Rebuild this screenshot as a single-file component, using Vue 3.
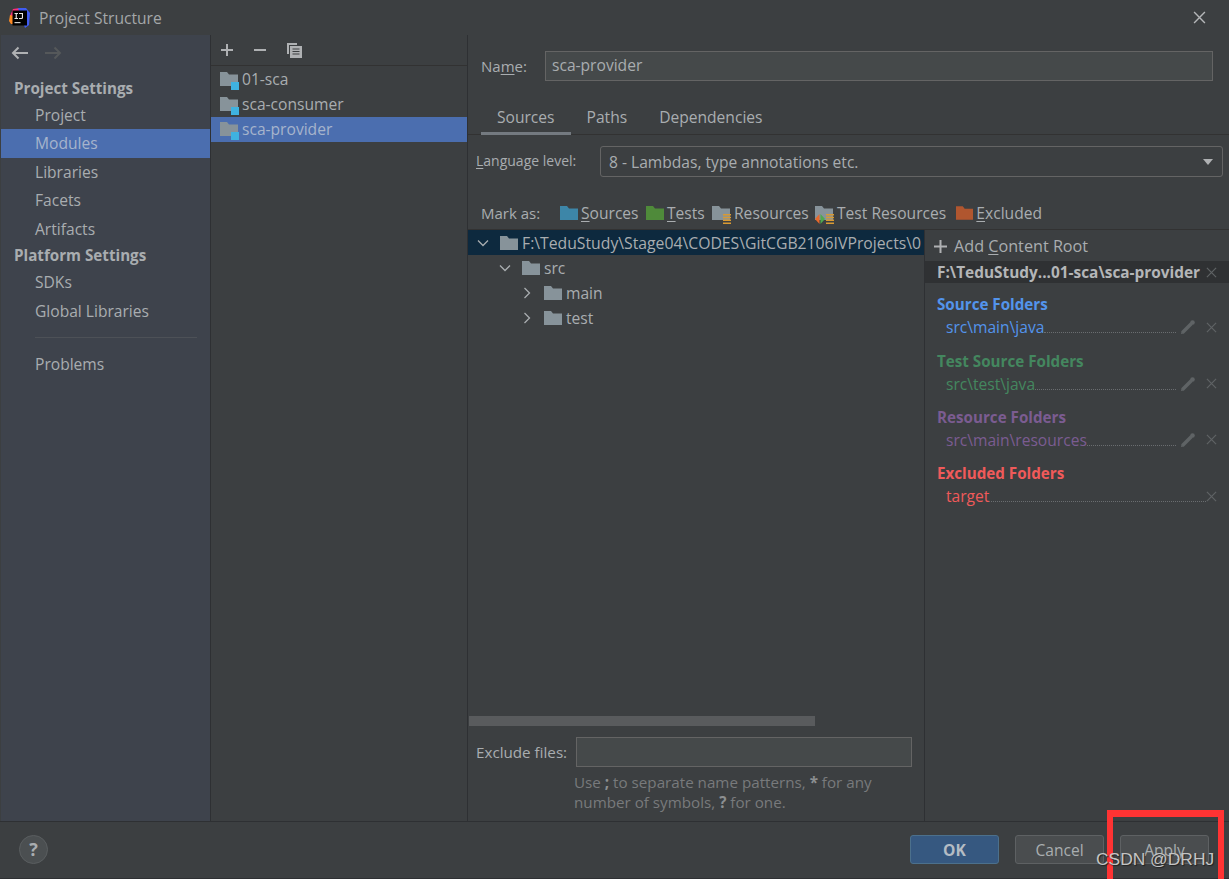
<script setup>
const navGroups = [
  { title: 'Project Settings', items: ['Project', 'Modules', 'Libraries', 'Facets', 'Artifacts'] },
  { title: 'Platform Settings', items: ['SDKs', 'Global Libraries'] }
]
const modules = ['01-sca', 'sca-consumer', 'sca-provider']
const tree = [
  { name: 'F:\\TeduStudy\\Stage04\\CODES\\GitCGB2106IVProjects\\0', depth: 0, open: true, selected: true },
  { name: 'src', depth: 1, open: true },
  { name: 'main', depth: 2, open: false },
  { name: 'test', depth: 2, open: false }
]
const folderGroups = [
  { title: 'Source Folders', path: 'src\\main\\java', color: '#5394ec', edit: true },
  { title: 'Test Source Folders', path: 'src\\test\\java', color: '#44875f', edit: true },
  { title: 'Resource Folders', path: 'src\\main\\resources', color: '#7b5c91', edit: true },
  { title: 'Excluded Folders', path: 'target', color: '#f05a5a', edit: false }
]
</script>

<template>
  <div class="window">
    <svg class="defs" width="0" height="0">
      <symbol id="folder" viewBox="0 0 18 14">
        <path d="M0 0h7l2 2.500h9V14H0z" fill="currentColor" />
      </symbol>
      <symbol id="close" viewBox="0 0 12 12">
        <path d="M1 1l10 10M11 1L1 11" stroke="currentColor" stroke-width="1.300" fill="none" />
      </symbol>
      <symbol id="pencil" viewBox="0 0 14 14">
        <path d="M1.500 12.500L10.500 3.500" stroke="currentColor" stroke-width="3.600" fill="none" />
        <path d="M0 14l.6-3 2.400 2.400z" fill="currentColor" />
        <circle cx="11.500" cy="2.500" r="2.300" fill="currentColor" />
      </symbol>
      <symbol id="stack" viewBox="0 0 8 10">
        <path d="M0 0h8v1.500H0zM0 2.800h8v1.500H0zM0 5.600h8v1.500H0zM0 8.400h8v1.500H0z" fill="#d99a33" />
      </symbol>
    </svg>

    <header class="titlebar">
      <svg class="logo" width="21" height="20" viewBox="0 0 21 20">
        <path d="M1 8L4 1l7-1 3 3-9 6-2 6z" fill="#fc2f7f" />
        <path d="M9 0l8 0 4 5-1 12-4 3z" fill="#3f5cf0" />
        <path d="M0 13l1-6 4 1v8l-3 0z" fill="#fd8a24" />
        <rect x="3.500" y="2.500" width="14.500" height="15" fill="#000" />
        <path d="M5.500 5h3.500v1H7.800v4H9v1H5.500v-1h1.200V6H5.500zM10 5h4v4.800q0 1.200-1.500 1.200H10v-1h2q.9 0 .9-.6V6H10z" fill="#e8e8e8" />
        <rect x="5.500" y="14" width="6" height="1.200" fill="#d0d0d0" />
      </svg>
      <span class="title">Project Structure</span>
      <svg class="win-close" width="13" height="13"><use href="#close" /></svg>
    </header>

    <main class="body">
      <aside class="sidebar">
        <div class="history">
          <svg width="18" height="14" viewBox="0 0 18 14"><path d="M17 7H2M7.500 1.500L2 7l5.500 5.500" fill="none" stroke="#afb1b3" stroke-width="2" /></svg>
          <svg width="18" height="14" viewBox="0 0 18 14"><path d="M1 7h15M10.500 1.500L16 7l-5.500 5.500" fill="none" stroke="#55585a" stroke-width="2" /></svg>
        </div>
        <template v-for="group in navGroups" :key="group.title">
          <div class="nav-title">{{ group.title }}</div>
          <div v-for="item in group.items" :key="item" class="nav-item" :class="{ active: item === 'Modules' }">{{ item }}</div>
        </template>
        <div class="nav-sep"></div>
        <div class="nav-item">Problems</div>
      </aside>

      <section class="modules">
        <div class="mod-toolbar">
          <svg width="14" height="14" viewBox="0 0 14 14"><path d="M7 1v12M1 7h12" stroke="#afb1b3" stroke-width="2" /></svg>
          <svg width="14" height="14" viewBox="0 0 14 14"><path d="M1 7h12" stroke="#afb1b3" stroke-width="2" /></svg>
          <svg width="17" height="17" viewBox="0 0 17 17">
            <path d="M1 1h10v2H3v9H1z" fill="#afb1b3" />
            <path d="M4 4h12v12H4z" fill="#afb1b3" />
            <path d="M6.500 7h7M6.500 9.500h7M6.500 12h7" stroke="#3c3f41" stroke-width="1.200" />
          </svg>
        </div>
        <div class="mod-list">
          <div v-for="m in modules" :key="m" class="mod-row" :class="{ active: m === 'sca-provider' }">
            <span class="mod-icon">
              <svg class="c-folder" width="18" height="14"><use href="#folder" /></svg>
              <i class="mod-badge"></i>
            </span>
            {{ m }}
          </div>
        </div>
      </section>

      <section class="detail">
        <div class="name-row">
          <label class="name-label">Na<u>m</u>e:</label>
          <div class="input name-input">sca-provider</div>
        </div>
        <nav class="tabs">
          <span class="tab current">Sources</span>
          <span class="tab">Paths</span>
          <span class="tab">Dependencies</span>
        </nav>
        <div class="lang-row">
          <label class="lang-label"><u>L</u>anguage level:</label>
          <div class="combo">
            8 - Lambdas, type annotations etc.
            <svg width="10" height="6" viewBox="0 0 10 6"><path d="M0 0h10L5 6z" fill="#afb1b3" /></svg>
          </div>
        </div>
        <div class="mark-row">
          <span class="mark-label">Mark as:</span>
          <span class="mark m-sources"><svg width="18" height="14"><use href="#folder" /></svg><span><u>S</u>ources</span></span>
          <span class="mark m-tests"><svg width="18" height="14"><use href="#folder" /></svg><span><u>T</u>ests</span></span>
          <span class="mark m-res">
            <span class="mark-icon">
              <svg class="c-folder" width="18" height="14"><use href="#folder" /></svg>
              <svg class="stack" width="8" height="10"><use href="#stack" /></svg>
            </span>
            <span>Resources</span>
          </span>
          <span class="mark m-testres">
            <span class="mark-icon">
              <svg class="c-folder" width="18" height="14"><use href="#folder" /></svg>
              <svg class="stack" width="8" height="10"><use href="#stack" /></svg>
              <svg class="arrows" width="10" height="10" viewBox="0 0 10 10"><path d="M4.500 0v10L0 5z" fill="#e8692c" /><path d="M5.500 0v10L10 5z" fill="#4fa84f" /></svg>
            </span>
            <span>Test Resources</span>
          </span>
          <span class="mark m-excl"><svg width="18" height="14"><use href="#folder" /></svg><span><u>E</u>xcluded</span></span>
        </div>

        <div class="content">
          <div class="tree-pane">
            <div class="tree">
              <div
                v-for="node in tree"
                :key="node.name"
                class="tree-row"
                :class="{ selected: node.selected }"
                :style="{ paddingLeft: 9 + node.depth * 22 + 'px' }"
              >
                <svg class="chevron" width="12" height="12" viewBox="0 0 12 12">
                  <path v-if="node.open" d="M1 3.500l5 5 5-5" />
                  <path v-else d="M3.500 1l5 5-5 5" />
                </svg>
                <svg class="c-folder" width="18" height="14"><use href="#folder" /></svg>
                <span class="tree-label">{{ node.name }}</span>
              </div>
            </div>
            <div class="hscroll"><div class="hthumb"></div></div>
            <div class="exclude-row">
              <label>Exclude files:</label>
              <div class="input exclude-input"></div>
            </div>
            <p class="hint">Use <b>;</b> to separate name patterns, <b>*</b> for any<br />number of symbols, <b>?</b> for one.</p>
          </div>

          <div class="roots">
            <div class="add-root">
              <svg width="13" height="13" viewBox="0 0 13 13"><path d="M6.500 0v13M0 6.500h13" stroke="#afb1b3" stroke-width="2" /></svg>
              <span>Add <u>C</u>ontent Root</span>
            </div>
            <div class="root-head">
              <span>F:\TeduStudy...01-sca\sca-provider</span>
              <svg class="x" width="11" height="11"><use href="#close" /></svg>
            </div>
            <div v-for="g in folderGroups" :key="g.title" class="folder-group" :style="{ color: g.color }">
              <div class="group-title">{{ g.title }}</div>
              <div class="group-item">
                <span>{{ g.path }}</span>
                <i class="dots"></i>
                <svg v-if="g.edit" class="pencil" width="14" height="14"><use href="#pencil" /></svg>
                <svg class="x" width="11" height="11"><use href="#close" /></svg>
              </div>
            </div>
          </div>
        </div>
      </section>
    </main>

    <footer class="footer">
      <div class="help">?</div>
      <div class="buttons">
        <button class="btn primary">OK</button>
        <button class="btn">Cancel</button>
        <button class="btn">Apply</button>
      </div>
    </footer>

    <div class="red-box"></div>
    <div class="watermark">CSDN @DRHJ</div>
  </div>
</template>

<style>
html, body {
  margin: 0;
  background: #3c3f41;
}
</style>

<style scoped>
.window {
  position: relative;
  width: 1229px;
  height: 879px;
  overflow: hidden;
  display: flex;
  flex-direction: column;
  background: #3c3f41;
  color: #a9adb0;
  font-family: "Open Sans", "Noto Sans", sans-serif;
  font-size: 15.600px;
}
.defs {
  position: absolute;
}
u {
  text-underline-offset: 2px;
}
.c-folder {
  color: #87939a;
  flex: none;
}

.titlebar {
  height: 35px;
  flex: none;
  display: flex;
  align-items: center;
  padding: 0 23px 0 9px;
  gap: 9px;
}
.title {
  flex: 1;
  color: #a4a7a9;
}
.win-close {
  color: #b4b6b8;
}

.body {
  flex: 1;
  min-height: 0;
  display: flex;
}

.sidebar {
  width: 209px;
  margin-left: 1px;
  flex: none;
  background: #3e434c;
  border-right: 1px solid #2e3033;
  display: flex;
  flex-direction: column;
}
.history {
  height: 36px;
  display: flex;
  align-items: center;
  gap: 15px;
  padding-left: 10px;
}
.nav-title {
  height: 32px;
  line-height: 35px;
  padding-left: 13px;
  font-weight: 700;
  font-size: 15.200px;
  color: #a9adb0;
}
.nav-item {
  height: 28.600px;
  line-height: 28px;
  padding-left: 34px;
}
.nav-title + .nav-item {
  height: 26px;
  line-height: 25px;
}
.nav-title ~ .nav-title {
  height: 25px;
  line-height: 24px;
}
.nav-title ~ .nav-title + .nav-item {
  height: 28.600px;
  line-height: 28px;
}
.nav-item.active {
  background: #4b6eaf;
  color: #a6b4cc;
}
.nav-sep {
  height: 1px;
  background: #4d5157;
  margin: 11px 13px 12px 34px;
}

.modules {
  width: 256px;
  flex: none;
  display: flex;
  flex-direction: column;
  border-right: 1px solid #2e3033;
}
.mod-toolbar {
  height: 30px;
  flex: none;
  border-bottom: 1px solid #323232;
  display: flex;
  align-items: center;
  gap: 19px;
  padding-left: 9px;
}
.mod-list {
  padding-top: 1px;
}
.mod-row {
  height: 25px;
  box-sizing: border-box;
  padding: 0 0 2px 9px;
  display: flex;
  align-items: center;
  gap: 3px;
}
.mod-row.active {
  background: #4b6eaf;
  color: #a6b4cc;
}
.mod-icon {
  position: relative;
  display: flex;
  width: 19px;
  height: 14px;
}
.mod-badge {
  position: absolute;
  right: 0;
  bottom: -4px;
  width: 8px;
  height: 8px;
  background: #3fb2e0;
}

.detail {
  flex: 1;
  min-width: 0;
  display: flex;
  flex-direction: column;
}
.input {
  background: #45494a;
  border: 1px solid #646464;
  box-sizing: border-box;
}
.name-row {
  height: 30px;
  margin-top: 16px;
  display: flex;
  align-items: center;
  padding-left: 13px;
}
.name-label {
  width: 64px;
  font-size: 15px;
}
.name-input {
  width: 668px;
  height: 30px;
  line-height: 27px;
  padding-left: 6px;
}
.tabs {
  height: 54px;
  box-sizing: border-box;
  display: flex;
  align-items: flex-end;
  border-bottom: 1px solid #323232;
  padding-left: 13px;
}
.tab {
  height: 33px;
  line-height: 32px;
  padding: 0 16px;
  box-sizing: border-box;
}
.tab.current {
  border-bottom: 3px solid #747a80;
  margin-bottom: -1px;
  height: 34px;
}
.lang-row {
  height: 31px;
  margin-top: 11px;
  display: flex;
  align-items: center;
  padding-left: 8px;
}
.lang-label {
  width: 124px;
  font-size: 14px;
  padding-bottom: 3px;
}
.combo {
  width: 623px;
  height: 31px;
  box-sizing: border-box;
  border: 1px solid #646464;
  border-radius: 3px;
  display: flex;
  align-items: center;
  justify-content: space-between;
  padding: 1px 9px 0 8px;
}
.mark-row {
  height: 53px;
  box-sizing: border-box;
  padding: 20px 0 0 13px;
  display: flex;
  align-items: center;
  border-bottom: 1px solid #323232;
}
.mark-label {
  width: 79px;
  flex: none;
  font-size: 15px;
}
.mark {
  display: flex;
  align-items: center;
  gap: 3px;
  width: 86px;
  flex: none;
}
.m-tests { width: 66px; }
.m-res { width: 103px; }
.m-testres { width: 141px; }
.m-sources svg { color: #3d86a8; }
.m-tests svg { color: #4f8a3a; }
.m-excl svg { color: #b0562f; }
.mark-icon {
  position: relative;
  display: flex;
  width: 19px;
  height: 14px;
}
.stack {
  position: absolute;
  right: 0;
  bottom: -4px;
}
.arrows {
  position: absolute;
  left: 0;
  bottom: -4px;
}

.content {
  flex: 1;
  min-height: 0;
  display: flex;
}
.tree-pane {
  width: 456px;
  flex: none;
  border-right: 1px solid #2e3033;
  display: flex;
  flex-direction: column;
}
.tree {
  height: 486px;
  overflow: hidden;
}
.tree-row {
  height: 25px;
  display: flex;
  align-items: center;
  white-space: nowrap;
  box-sizing: border-box;
  overflow: hidden;
}
.tree-row.selected {
  background: #0d293e;
  font-size: 15.750px;
}
.chevron {
  flex: none;
  margin-right: 11px;
  fill: none;
  stroke: #a9adb0;
  stroke-width: 1.300;
}
.tree-label {
  margin-left: 4px;
}
.hscroll {
  height: 10px;
  padding-left: 1px;
}
.hthumb {
  width: 346px;
  height: 10px;
  background: #595b5d;
}
.exclude-row {
  display: flex;
  align-items: center;
  margin-top: 11px;
  padding-left: 8px;
  gap: 9px;
  font-size: 15.200px;
}
.exclude-input {
  width: 336px;
  height: 30px;
}
.hint {
  margin: 5px 0 0 106px;
  color: #787a7c;
  line-height: 20px;
  font-size: 15.200px;
}
.hint b {
  color: #8c8f91;
}

.roots {
  flex: 1;
  min-width: 0;
}
.add-root {
  height: 31px;
  display: flex;
  align-items: center;
  gap: 7px;
  padding: 1px 0 0 9px;
  box-sizing: border-box;
  font-size: 16.200px;
}
.root-head {
  height: 22px;
  background: #2f3133;
  color: #b4b6b8;
  font-weight: 700;
  font-size: 15.400px;
  display: flex;
  align-items: center;
  justify-content: space-between;
  padding: 0 12px;
  white-space: nowrap;
}
.x {
  flex: none;
  color: #5f6365;
}
.folder-group {
  margin-top: 8.330px;
  padding: 0 12px;
}
.group-title {
  height: 24px;
  line-height: 26px;
  font-weight: 700;
  font-size: 15.200px;
}
.group-item {
  height: 24px;
  display: flex;
  align-items: center;
  padding-left: 9px;
}
.dots {
  flex: 1;
  height: 0;
  align-self: flex-end;
  margin-bottom: 6px;
  border-bottom: 1px dotted #6a6d70;
}
.pencil {
  flex: none;
  margin: 0 11px 0 5px;
  color: #5f6365;
}

.footer {
  height: 58px;
  flex: none;
  box-sizing: border-box;
  border-top: 1px solid #2e3033;
  border-bottom: 1px solid #2e3033;
  display: flex;
  align-items: center;
  justify-content: space-between;
  padding: 0 20px 1px 19px;
}
.help {
  width: 29px;
  height: 29px;
  border-radius: 50%;
  background: #4b4f51;
  border: 1px solid #5a5e60;
  box-sizing: border-box;
  text-align: center;
  line-height: 26px;
  font-size: 18px;
  font-weight: 700;
  color: #a9adb0;
}
.buttons {
  display: flex;
  gap: 16px;
}
.btn {
  width: 89px;
  height: 29px;
  border: 1px solid #5e6163;
  border-radius: 3px;
  background: #4a4d4f;
  color: #a9adb0;
  font: inherit;
  padding: 0;
}
.btn.primary {
  background: #365880;
  border-color: #4c708c;
  font-weight: 700;
  color: #b4bcc4;
}

/* annotation drawn over the screenshot */
.red-box {
  position: absolute;
  left: 1107px;
  top: 810px;
  width: 117px;
  height: 69px;
  box-sizing: border-box;
  border: 6px solid #ff3333;
  border-top-width: 7px;
  border-bottom: 0;
}
.watermark {
  position: absolute;
  left: 1096px;
  top: 849px;
  color: #c4c4c4;
  font-family: "Liberation Sans", sans-serif;
  font-size: 17.400px;
  text-shadow: 1px 1px 1px #222;
  white-space: nowrap;
}
</style>
